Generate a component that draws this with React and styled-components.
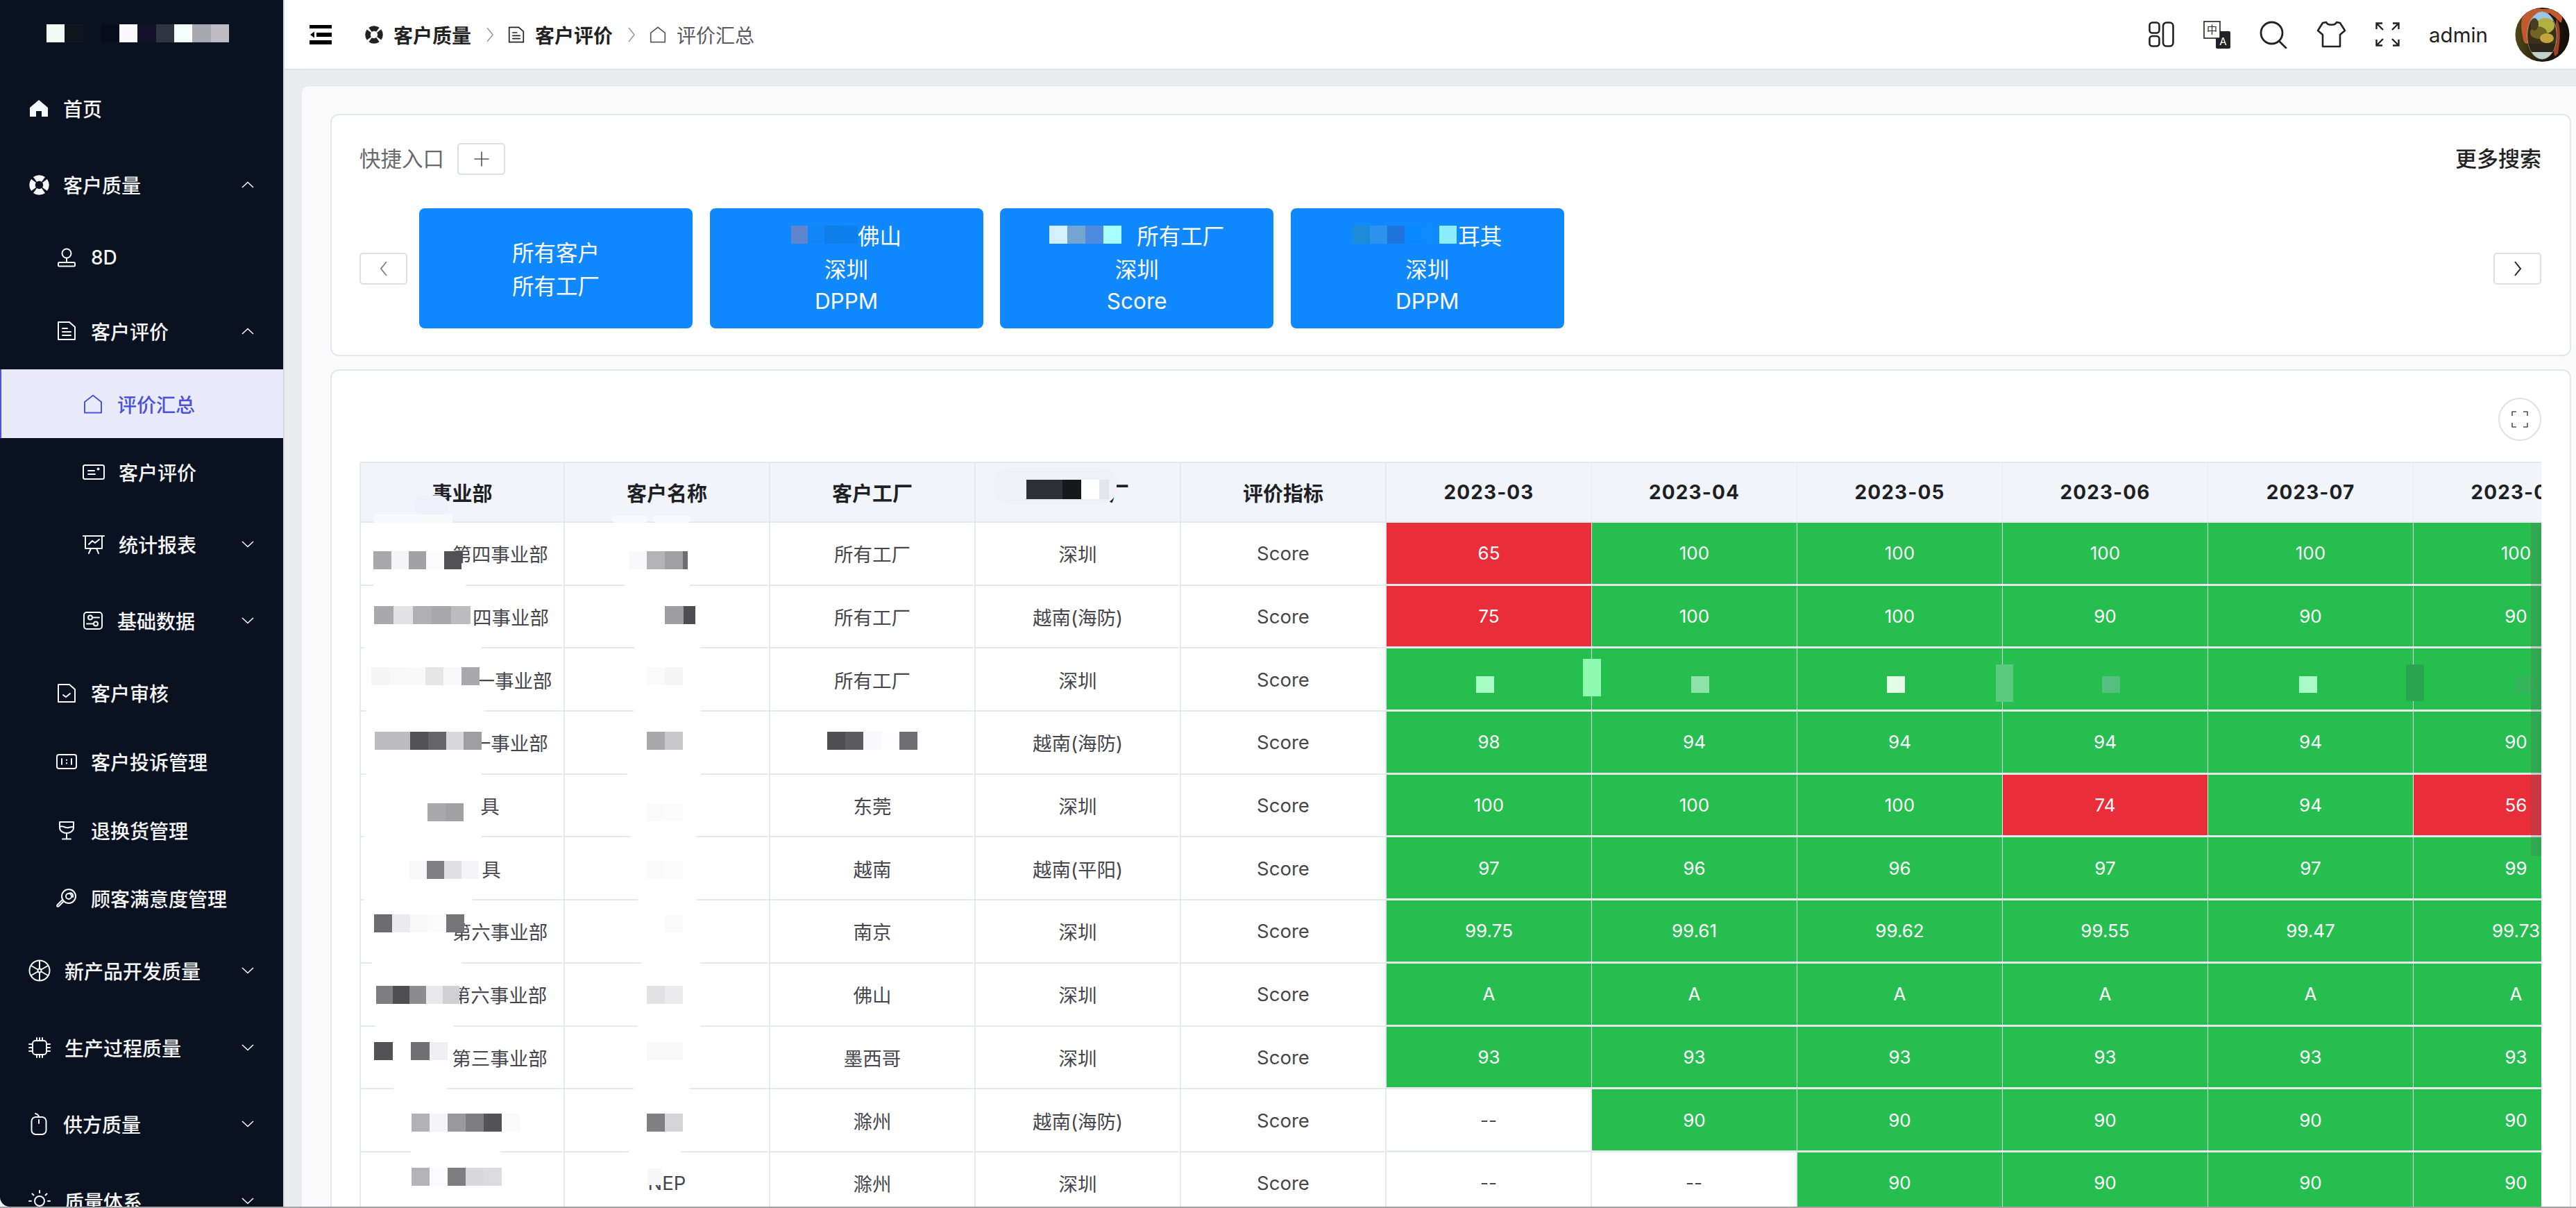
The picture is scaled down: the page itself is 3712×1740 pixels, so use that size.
import React from 'react';
import styled, { createGlobalStyle } from 'styled-components';

const Reset = createGlobalStyle`
  html, body { margin: 0; padding: 0; background: #a2a2a4; }
  body { font-family: Inter, "Noto Sans CJK SC", "Noto Sans", sans-serif; overflow: hidden; }
  * { box-sizing: border-box; }
`;

const Shell = styled.div`
  display: flex;
  width: 3712px;
  height: 1738px;
  overflow: hidden;
  background: #f1f2f5;
`;

/* ---------- sidebar ---------- */
const Sidebar = styled.nav`
  flex: 0 0 410px;
  background: #0a1120;
  border-right: 2px solid #d4d6da;
  border-bottom-left-radius: 14px;
  overflow: hidden;
  color: #f6f7f8;
`;

const LogoBar = styled.div`
  height: 101px;
  padding: 35px 0 0 67px;
`;

const MenuRow = styled.div`
  display: flex;
  align-items: center;
  gap: 20px;
  height: ${p => p.$h}px;
  padding-left: ${p => [41, 81, 119][p.$level]}px;
  padding-right: 42px;
  font-size: 28px;
  font-weight: 500;
  background: ${p => (p.$active ? '#e9ebfb' : 'transparent')};
  color: ${p => (p.$active ? '#4b52dd' : 'inherit')};
  box-shadow: ${p => (p.$active ? 'inset 2px 0 0 #4b52dd' : 'none')};
`;

const MenuIcon = styled.span`
  flex: 0 0 30px;
  height: 30px;
  display: flex;
  align-items: center;
  justify-content: center;
`;

const MenuLabel = styled.span`
  flex: 1;
  white-space: nowrap;
`;

/* ---------- main column ---------- */
const Main = styled.div`
  flex: 1;
  min-width: 0;
  display: flex;
  flex-direction: column;
`;

const TopBar = styled.header`
  flex: 0 0 101px;
  display: flex;
  align-items: center;
  padding: 0 9px 0 36px;
  background: #fff;
  border-bottom: 2px solid #dfe1e7;
`;

const Crumbs = styled.div`
  flex: 1;
  display: flex;
  align-items: center;
  margin-left: 48px;
  font-size: 28px;
  color: #222;
`;

const Crumb = styled.span`
  display: flex;
  align-items: center;
  gap: 15px;
  font-weight: ${p => (p.$current ? 400 : 600)};
  color: ${p => (p.$current ? '#5a5a60' : '#222')};
`;

const CrumbSep = styled.span`
  display: flex;
  margin: 0 20.5px;
  color: #9a9ca2;
`;

const Tools = styled.div`
  display: flex;
  align-items: center;
  gap: 42px;
  color: #222;
`;

const ToolIcon = styled.span`
  display: flex;
  width: ${p => p.$w}px;
  justify-content: center;
`;

const UserName = styled.span`
  width: 82px;
  font-size: 29.5px;
  line-height: 1;
  color: #222;
  padding-top: 2px;
`;

const Band = styled.div`
  flex: 1;
  min-height: 0;
  padding: 22px 0 0 25px;
  background: #ebecef;
`;

const Panel = styled.main`
  height: 100%;
  padding: 40px 7px 0 41px;
  background: #fafafb;
  border-top: 1px solid #e4e6ea;
  border-top-left-radius: 10px;
  overflow: hidden;
`;

const Card = styled.section`
  background: #fff;
  border: 2px solid #e3e6ee;
  border-radius: 12px;
  margin-top: ${p => p.$top || 0}px;
  padding: ${p => p.$pad};
`;

const QuickHead = styled.div`
  display: flex;
  align-items: center;
  height: 46px;
`;

const QuickTitle = styled.span`
  font-size: 30.5px;
  line-height: 44px;
  color: #6a6a6e;
  margin-right: 19px;
`;

const MoreLink = styled.span`
  margin-left: auto;
  font-size: 31px;
  line-height: 44px;
  font-weight: 500;
  color: #222;
`;

const PlainButton = styled.button`
  width: 69px;
  height: 46px;
  padding: 0;
  display: flex;
  align-items: center;
  justify-content: center;
  background: #fff;
  border: 2px solid #dcdfe6;
  border-radius: 5px;
  color: ${p => p.$color || '#555'};
`;

const Carousel = styled.div`
  display: flex;
  align-items: center;
  margin-top: 48px;
`;

const Shortcuts = styled.div`
  flex: 1;
  display: flex;
  gap: 24.6px;
  margin-left: 17px;
`;

const Shortcut = styled.div`
  width: 394px;
  height: 173px;
  padding-bottom: 2px;
  display: flex;
  flex-direction: column;
  align-items: center;
  justify-content: center;
  border-radius: 8px;
  background: #1088ff;
  color: #fff;
  font-size: 31.5px;
`;

const ShortcutLine = styled.div`
  display: flex;
  align-items: center;
  height: 48px;
`;

const Mosaic = styled.span`
  flex: none;
  position: relative;
  z-index: 2;
  display: inline-flex;
  margin-right: ${p => p.$mr || 0}px;
  transform: translateY(${p => p.$dy || 0}px);
`;

const Tile = styled.i`
  display: block;
  width: ${p => p.$w}px;
  height: ${p => p.$h || 26}px;
  background: ${p => p.$c};
`;

const TableTools = styled.div`
  display: flex;
  justify-content: flex-end;
  margin-bottom: 30px;
`;

const RoundButton = styled.span`
  width: 62px;
  height: 62px;
  display: flex;
  align-items: center;
  justify-content: center;
  border: 2px solid #dfe2ea;
  border-radius: 50%;
  color: #555;
`;

const TableClip = styled.div`
  position: relative;
  overflow: hidden;
  height: 1200px;
`;

const Row = styled.div`
  display: grid;
  grid-template-columns: 294px repeat(11, 296px);
  width: 3552px;
  height: ${p => (p.$head ? 88 : 90.7)}px;
  border-left: 2px solid #e6e8f2;
`;

const HeadCell = styled.div`
  position: relative;
  display: flex;
  align-items: center;
  justify-content: center;
  background: #f1f4f9;
  border-top: 2px solid #e6e8f2;
  border-right: ${p => (p.$thin ? '1px solid #e8eaf1' : '2px solid #e6e8f2')};
  border-bottom: 2px solid #e6e8f2;
  font-size: ${p => (p.$date ? 28 : 29)}px;
  font-weight: ${p => (p.$date ? 700 : 600)};
  color: #1f1f26;
  letter-spacing: ${p => (p.$date ? '1.1px' : '0')};
`;

const TextCell = styled.div`
  position: relative;
  display: flex;
  align-items: center;
  justify-content: center;
  border-right: 2px solid #e6e8f2;
  border-bottom: 2px solid #e6e8f2;
  font-size: 27.5px;
  color: #46464c;
  white-space: nowrap;
`;

const CellBody = styled.span`
  display: flex;
  align-items: center;
  transform: translateX(${p => p.$dx || 0}px);
`;

const ValueCell = styled.div`
  position: relative;
  display: flex;
  align-items: center;
  justify-content: center;
  background: ${p => ({ g: '#25be4f', r: '#e92e39', n: '#fff' }[p.$tone])};
  border-right: ${p => (p.$tone === 'n' ? '2px solid #e6e8f2' : '1.5px solid #ecf7ee')};
  border-bottom: 3px solid #e6e8ee;
  font-size: 26px;
  color: ${p => (p.$tone === 'n' ? '#46464c' : '#fff')};
`;

/* a mosaic square laid over a value */
const Patch = styled.i`
  position: absolute;
  z-index: 2;
  left: ${p => p.$l}px;
  top: ${p => p.$t}px;
  width: ${p => p.$w}px;
  height: ${p => p.$h}px;
  background: ${p => p.$c};
  border-radius: ${p => p.$r || 0}px;
`;

const RowGap = styled.i`
  position: absolute;
  z-index: 1;
  left: ${p => p.$l}px;
  bottom: -3px;
  width: ${p => p.$w}px;
  height: 4px;
  background: #fff;
`;

const ScrollThumb = styled.div`
  position: absolute;
  z-index: 3;
  right: 0;
  top: 88px;
  width: 15px;
  height: 480px;
  background: rgba(90, 90, 90, 0.22);
`;

/* ---------- icons ---------- */
const Svg = ({ w = 28, h = 28, vb = '0 0 28 28', sw = 2, children, fill = 'none' }) => (
  <svg width={w} height={h} viewBox={vb} fill={fill} stroke="currentColor" strokeWidth={sw} strokeLinecap="round" strokeLinejoin="round">
    {children}
  </svg>
);

const HomeIcon = () => (
  <Svg><path d="M14 2 L27 13 V26 H18 V18 H10 V26 H1 V13 Z" fill="currentColor" stroke="none" /></Svg>
);
const BuoyIcon = ({ size = 29 }) => (
  <svg width={size} height={size} viewBox="0 0 29 29" fill="none">
    <circle cx="14.5" cy="14.5" r="10" stroke="currentColor" strokeWidth="8.5" pathLength="100" strokeDasharray="20.5 4.5" strokeDashoffset="-14.7" />
  </svg>
);
const StampIcon = () => (
  <Svg><circle cx="14" cy="8" r="6.5" /><path d="M14 15 V21" /><rect x="2" y="21" width="24" height="5.5" rx="1.5" /></Svg>
);
const DocIcon = ({ w = 28, h = 29 }) => (
  <Svg w={w} h={h} vb="0 0 28 29"><path d="M2 2 H18 L26 9 V27 H2 Z" /><path d="M8 11 H15 M8 16 H20 M8 21 H20" /></Svg>
);
const HouseOutline = ({ w = 28, h = 28 }) => (
  <Svg w={w} h={h}><path d="M2 11 L14 1.5 L26 11 V26.5 H2 Z" /></Svg>
);
const CardIcon = () => (
  <Svg w={32} h={24} vb="0 0 32 24"><rect x="1" y="2" width="30" height="20" rx="2.5" /><path d="M8 10 H17 M8 15 H18" /><circle cx="22.5" cy="7.5" r="1" fill="currentColor" /></Svg>
);
const BoardIcon = () => (
  <Svg w={32} h={28} vb="0 0 32 28"><path d="M1 2 H31 M4 2 V20 H28 V2 M9 27 L12 20 M23 27 L20 20" /><path d="M9 14 L14 9 L18 12 L24 7" /></Svg>
);
const SlidersIcon = () => (
  <Svg w={30} h={28} vb="0 0 30 28"><rect x="2" y="2" width="26" height="24" rx="4" /><circle cx="11" cy="9.5" r="3" /><path d="M14 9.5 H24" /><circle cx="19" cy="18.5" r="3" /><path d="M6 18.5 H16" /></Svg>
);
const FileCheckIcon = () => (
  <Svg><path d="M2 2 H18 L26 9 V27 H2 Z" /><path d="M9 17 L13 20 L19 15" /></Svg>
);
const RatioIcon = () => (
  <Svg w={30} h={24} vb="0 0 30 24"><rect x="1" y="2" width="28" height="20" rx="3" /><path d="M8 8 V16 M22 8 V16" /><path d="M15 9.5 V10 M15 14 V14.5" /></Svg>
);
const GlassIcon = () => (
  <Svg w={24} h={28} vb="0 0 24 28"><path d="M2 2 H22 V10 C22 15 17 18 12 18 C7 18 2 15 2 10 Z" /><path d="M2 9 C7 6 10 12 15 10 C18 9 20 9 22 9" /><path d="M12 18 V26 M6 26.5 H18" /></Svg>
);
const LensIcon = () => (
  <Svg w={30} h={28} vb="0 0 30 28"><circle cx="18" cy="11" r="10" /><circle cx="18" cy="11" r="4" /><path d="M18 7 C22 5 25 8 24 12" /><path d="M11 18 L4 25 C2 27 0 25 2 23 L9 16" /></Svg>
);
const WheelIcon = () => (
  <Svg w={32} h={32} vb="0 0 32 32"><circle cx="16" cy="16" r="14.5" /><circle cx="16" cy="16" r="2.5" /><path d="M16 2 V13 M16 19 V30 M4 9 L13.5 14.5 M18.5 17.5 L28 23 M28 9 L18.5 14.5 M13.5 17.5 L4 23" /></Svg>
);
const ChipIcon = () => (
  <Svg w={32} h={30} vb="0 0 32 30"><rect x="6" y="5" width="20" height="20" rx="4" /><path d="M12 1 V5 M16 1 V5 M20 1 V5 M12 25 V29 M16 25 V29 M20 25 V29 M1 10 H6 M1 15 H6 M1 20 H6 M26 10 H31 M26 15 H31 M26 20 H31" /></Svg>
);
const MouseIcon = () => (
  <Svg w={24} h={32} vb="0 0 24 32"><rect x="1.5" y="6" width="21" height="25" rx="6" /><path d="M12 10 V15 M12 6 C12 3 10 2 7 1" /></Svg>
);
const SunIcon = () => (
  <Svg w={32} h={32} vb="0 0 32 32"><circle cx="16" cy="16" r="7" /><path d="M16 1 V4 M16 28 V31 M1 16 H4 M28 16 H31 M5.5 5.5 L7.5 7.5 M26.5 5.5 L24.5 7.5" /></Svg>
);
const Chevron = ({ up }) => (
  <svg width="18" height="10" viewBox="0 0 18 10" fill="none" stroke="currentColor" strokeWidth="1.6">
    <path d={up ? 'M1 9 L9 1.5 L17 9' : 'M1 1 L9 8.5 L17 1'} />
  </svg>
);
const SideArrow = ({ left, w = 12, h = 24, sw = 1.6 }) => (
  <svg width={w} height={h} viewBox="0 0 12 24" fill="none" stroke="currentColor" strokeWidth={sw}>
    <path d={left ? 'M10 2 L2 12 L10 22' : 'M2 2 L10 12 L2 22'} />
  </svg>
);
const FoldIcon = () => (
  <svg width="32" height="28" viewBox="0 0 32 28" fill="currentColor">
    <rect x="0" y="0" width="32" height="5" />
    <rect x="10" y="11" width="22" height="6" />
    <rect x="0" y="22" width="32" height="6" />
    <path d="M1 14 L7 9.5 V18.5 Z" />
  </svg>
);
const LayoutIcon = () => (
  <Svg w={37} h={37} vb="0 0 37 37" sw={2.6}>
    <rect x="1.5" y="1.5" width="14" height="15" rx="4" />
    <rect x="1.5" y="21" width="14" height="14.5" rx="4" />
    <rect x="21" y="1.5" width="14.5" height="34" rx="5" />
  </Svg>
);
const TranslateIcon = () => (
  <svg width="39" height="40" viewBox="0 0 39 40">
    <rect x="18" y="15" width="21" height="25" rx="2" fill="#222" />
    <rect x="1" y="1" width="23" height="24" fill="#fff" stroke="#222" strokeWidth="1.6" />
    <text x="12.5" y="18" fontSize="15" textAnchor="middle" fill="#222" fontFamily="Noto Sans CJK SC">中</text>
    <text x="28.5" y="35" fontSize="15" textAnchor="middle" fill="#fff" fontFamily="Inter">A</text>
  </svg>
);
const SearchIcon = () => (
  <Svg w={40} h={40} vb="0 0 40 40" sw={2.8}><circle cx="17.5" cy="17.5" r="15.5" /><path d="M28 29 L38 39" /></Svg>
);
const ShirtIcon = () => (
  <Svg w={43} h={39} vb="0 0 43 39" sw={2.6}>
    <path d="M14 2 C16 7 27 7 29 2 L34 3 L41 14 L34 20 V37 H9 V20 L2 14 L9 3 Z" />
  </Svg>
);
const ExpandIcon = () => (
  <Svg w={35} h={35} vb="0 0 35 35" sw={2.4}>
    <path d="M1.5 10 V1.5 H10 M1.5 1.5 L11 11 M33.5 10 V1.5 H25 M33.5 1.5 L24 11 M1.5 25 V33.5 H10 M1.5 33.5 L11 24 M33.5 25 V33.5 H25 M33.5 33.5 L24 24" strokeLinecap="butt" strokeLinejoin="miter" />
  </Svg>
);
const CornersIcon = () => (
  <Svg w={24} h={24} vb="0 0 24 24" sw={1.6}>
    <path d="M1 7 V1 H7 M17 1 H23 V7 M1 17 V23 H7 M17 23 H23 V17" strokeLinecap="butt" strokeLinejoin="miter" />
  </Svg>
);
const PlusIcon = () => (
  <Svg w={22} h={22} vb="0 0 22 22" sw={1.6}><path d="M11 1 V21 M1 11 H21" /></Svg>
);
const Avatar = () => (
  <svg width="79" height="78" viewBox="0 0 79 78">
    <defs>
      <clipPath id="disc"><circle cx="39.5" cy="39" r="39" /></clipPath>
      <clipPath id="ball"><ellipse cx="39" cy="40" rx="21" ry="34" /></clipPath>
      <linearGradient id="scene" x1="0" y1="0" x2="1" y2="0">
        <stop offset="0" stopColor="#4e4a16" />
        <stop offset="0.45" stopColor="#2a1c0e" />
        <stop offset="1" stopColor="#120c08" />
      </linearGradient>
    </defs>
    <g clipPath="url(#disc)">
      <rect width="79" height="78" fill="url(#scene)" />
      <path d="M10 16 C14 6 26 0 38 2 L62 2 C68 10 70 16 66 22 L58 14 L50 8 L30 8 L24 16 L20 46 C20 54 14 54 12 46 C10 36 8 26 10 16 Z" fill="#c25a30" />
      <path d="M60 16 C66 26 66 44 62 66 L58 70 C54 66 58 50 58 30 Z" fill="#9c4426" />
      <ellipse cx="39" cy="40" rx="21.5" ry="34.5" fill="#c9d2d0" />
      <g clipPath="url(#ball)">
        <rect x="17" y="5" width="44" height="70" fill="#3a3018" />
        <rect x="17" y="5" width="44" height="14" fill="#9fc4e4" />
        <ellipse cx="44" cy="26" rx="13" ry="11" fill="#b0b040" />
        <ellipse cx="34" cy="36" rx="12" ry="9" fill="#6f6420" />
        <ellipse cx="46" cy="44" rx="10" ry="7" fill="#c2a63c" />
        <ellipse cx="28" cy="24" rx="6" ry="9" fill="#4a3c1e" />
        <rect x="17" y="52" width="44" height="12" fill="#2a261a" />
        <rect x="17" y="64" width="44" height="12" fill="#c4d0ce" />
      </g>
    </g>
  </svg>
);

/* ---------- data ---------- */
const MENU = [
  { label: '首页', icon: <HomeIcon />, level: 0, h: 110 },
  { label: '客户质量', icon: <BuoyIcon />, level: 0, h: 110, arrow: 'up' },
  { label: '8D', icon: <StampIcon />, level: 1, h: 100 },
  { label: '客户评价', icon: <DocIcon />, level: 1, h: 111, arrow: 'up' },
  { label: '评价汇总', icon: <HouseOutline />, level: 2, h: 99, active: true },
  { label: '客户评价', icon: <CardIcon />, level: 2, h: 98 },
  { label: '统计报表', icon: <BoardIcon />, level: 2, h: 110, arrow: 'down' },
  { label: '基础数据', icon: <SlidersIcon />, level: 2, h: 110, arrow: 'down' },
  { label: '客户审核', icon: <FileCheckIcon />, level: 1, h: 98 },
  { label: '客户投诉管理', icon: <RatioIcon />, level: 1, h: 99 },
  { label: '退换货管理', icon: <GlassIcon />, level: 1, h: 99 },
  { label: '顾客满意度管理', icon: <LensIcon />, level: 1, h: 98 },
  { label: '新产品开发质量', icon: <WheelIcon />, level: 0, h: 110, arrow: 'down' },
  { label: '生产过程质量', icon: <ChipIcon />, level: 0, h: 111, arrow: 'down' },
  { label: '供方质量', icon: <MouseIcon />, level: 0, h: 110, arrow: 'down' },
  { label: '质量体系', icon: <SunIcon />, level: 0, h: 112, arrow: 'down' },
];

const LOGO = ['#f2f8f4', '#10141f', '#0a1120', '#070c1c', '#f8f8fd', '#12122a', '#2e353f', '#f4feff', '#a8a8b2', '#bdbdc3'];

const SHORTCUTS = [
  { lines: ['所有客户', '所有工厂'] },
  { mosaic: ['#5f86cd', '#1186f8', '#0f7ee8', '#0f7fee'], w: 24, mr: 0, first: '佛山', lines: ['深圳', 'DPPM'] },
  { mosaic: ['#d4f0ff', '#72a5d0', '#4f89e0', '#a8fdff'], w: 26, mr: 22, first: '所有工厂', lines: ['深圳', 'Score'] },
  { mosaic: ['#1c8cd8', '#2e92ef', '#1d74dd', '#0a88ff', '#0f8aff', '#8beeff'], w: 25, mr: 2, first: '耳其', lines: ['深圳', 'DPPM'] },
];

const DATES = ['2023-03', '2023-04', '2023-05', '2023-06', '2023-07', '2023-08'];

// tiles: "hex" or "hex:width"
const m = (tiles, w, dy = 0, mr = 0) => ({
  tiles: tiles.split(' ').map(t => {
    const [c, tw] = t.split(':');
    return { c: '#' + c, w: tw ? Number(tw) : w };
  }),
  dy,
  mr,
});

const ROWS = [
  {
    dept: m('a9a9ac f5f5f7 a2a2a5 fbfbfc 525255', 25.4, 10, -13), deptText: '第四事业部', dx: -2,
    cust: m('f8f8fa b4b4b6 a0a0a2 6e6e70:7', 26, 10), custDx: -13, factory: '所有工厂', plant: '深圳',
    vals: ['r65', '100', '100', '100', '100', '100'], gaps: [[18, 133], [86, 94]],
  },
  {
    dept: m('a9a9ac e2e2e4 b0b0b2 a8a8aa bcbcbe', 27.8, -2, 3), deptText: '四事业部', dx: -1,
    cust: m('9e9ea0:27 4e4e52:17', 26, -2), custDx: 19, factory: '所有工厂', plant: '越南(海防)',
    vals: ['r75', '100', '100', '90', '90', '90'], gaps: [[5, 169], [100, 95]],
  },
  {
    dept: m('f5f5f6 f8f8f8 f9f9f9 e6e6e6 f8f8f8 a9a9ab', 26, -5, -5), deptText: '一事业部', dx: -1,
    cust: m('fafafa f5f5f5', 26, -5), custDx: -3, factory: '所有工厂', plant: '深圳',
    vals: ['', '', '', '', '', ''], gaps: [[7, 171], [99, 97]],
    patches: [
      [[129, 40, 26, 24, '#a8fbc5'], [283, 15, 26, 54, '#8ffbb0']],
      [[143, 40, 26, 24, '#8ee2a8']],
      [[129, 40, 26, 24, '#e4fbe8'], [286, 23, 25, 54, '#5ac97e']],
      [[143, 40, 26, 24, '#55bf80']],
      [[131, 40, 26, 24, '#a8fbc5'], [285, 23, 26, 53, '#2aa651']],
      [[146, 40, 26, 24, '#35b55a']],
    ],
  },
  {
    dept: m('bcbcbe bcbcbe 525255 666668 d8d8da 9f9fa1', 25.6, -2, -14), deptText: '一事业部', dx: -1,
    cust: m('a9a9ab c8c8ca', 26, -2), custDx: -3, factory: m('4f4f52 5c5c5e f8f8fa fdfdff 6e6e70', 26, -2), plant: '越南(海防)',
    vals: ['98', '94', '94', '94', '94', '90'], gaps: [[7, 167], [90, 106]],
  },
  {
    dept: m('a9a9ab a2a2a4', 26, 10, 24), deptText: '具', dx: 2,
    cust: m('fafafa fbfbfb', 26, 10), custDx: -3, factory: '东莞', plant: '深圳',
    vals: ['100', '100', '100', 'r74', '94', 'r56'], gaps: [[4, 170], [95, 94]],
  },
  {
    dept: m('f8f8f8 808082 e0e0e2 f5f5f7', 25, 2, 4), deptText: '具', dx: -10,
    cust: m('fafafa fbfbfb', 26, 2), custDx: -3, factory: '越南', plant: '越南(平阳)',
    vals: ['97', '96', '96', '97', '97', '99'], gaps: [[4, 157], [105, 85]],
  },
  {
    dept: m('6c6c6e ececee f8f8f8 fbfbfb 767678', 26, -11, -17), deptText: '第六事业部', dx: -2,
    cust: m('ffffff fafafa', 26, -11), custDx: -3, factory: '南京', plant: '深圳',
    vals: ['99.75', '99.61', '99.62', '99.55', '99.47', '99.73'], gaps: [[16, 129], [110, 85]],
  },
  {
    dept: m('7e7e80 4f4f52 8c8c8e e8e8ea d0d0d2', 24, 1, -11), deptText: '第六事业部', dx: -1,
    cust: m('e2e2e4 ebebed', 26, 1), custDx: -3, factory: '佛山', plant: '深圳',
    vals: ['A', 'A', 'A', 'A', 'A', 'A'], gaps: [[21, 113], [105, 90]],
  },
  {
    dept: m('525255 ffffff 707072 f0f0f2', 26.5, -9, 6), deptText: '第三事业部', dx: -2,
    cust: m('f8f8f8 f8f8f8', 26, -9), custDx: -3, factory: '墨西哥', plant: '深圳',
    vals: ['93', '93', '93', '93', '93', '93'], gaps: [[47, 77], [99, 81]],
  },
  {
    dept: m('b2b2b4 f5f5f7 9a9a9c 7e7e80 535356 fafafa', 26, 3), deptText: '', dx: 5,
    cust: m('808082 d4d4d6', 26, 3), custDx: -3, factory: '滁州', plant: '越南(海防)',
    vals: ['--', '90', '90', '90', '90', '90'], gaps: [[72, 129], [92, 75]],
  },
  {
    dept: m('b4b4b6 fbfbfd 7e7e80 d8d8da dcdcde', 26, -9), deptText: '', dx: -8,
    custText: 'NEP', custVeil: true, factory: '滁州', plant: '深圳',
    vals: ['--', '--', '90', '90', '90', '90'], gaps: [],
  },
];

const Tiles = ({ data }) => (
  <Mosaic $dy={data.dy} $mr={data.mr}>
    {data.tiles.map((t, i) => <Tile key={i} $c={t.c} $w={t.w} />)}
  </Mosaic>
);

const toneOf = v => (v === '--' ? 'n' : v[0] === 'r' ? 'r' : 'g');

function App() {
  return (
    <Shell>
      <Reset />
      <Sidebar>
        <LogoBar>
          <Mosaic>
            {LOGO.map((c, i) => <Tile key={i} $c={c} $w={26.3} />)}
          </Mosaic>
        </LogoBar>
        {MENU.map((item, i) => (
          <MenuRow key={i} $h={item.h} $level={item.level} $active={item.active}>
            <MenuIcon>{item.icon}</MenuIcon>
            <MenuLabel>{item.label}</MenuLabel>
            {item.arrow && <Chevron up={item.arrow === 'up'} />}
          </MenuRow>
        ))}
      </Sidebar>

      <Main>
        <TopBar>
          <FoldIcon />
          <Crumbs>
            <Crumb><BuoyIcon size={26} />客户质量</Crumb>
            <CrumbSep><SideArrow /></CrumbSep>
            <Crumb><DocIcon w={24} h={28} />客户评价</Crumb>
            <CrumbSep><SideArrow /></CrumbSep>
            <Crumb $current><HouseOutline w={24} h={28} />评价汇总</Crumb>
          </Crumbs>
          <Tools>
            <ToolIcon $w={37}><LayoutIcon /></ToolIcon>
            <ToolIcon $w={39}><TranslateIcon /></ToolIcon>
            <ToolIcon $w={40}><SearchIcon /></ToolIcon>
            <ToolIcon $w={43}><ShirtIcon /></ToolIcon>
            <ToolIcon $w={35}><ExpandIcon /></ToolIcon>
            <UserName>admin</UserName>
            <Avatar />
          </Tools>
        </TopBar>

        <Band>
          <Panel>
            <Card $pad="40px 41px 38px 40px">
              <QuickHead>
                <QuickTitle>快捷入口</QuickTitle>
                <PlainButton><PlusIcon /></PlainButton>
                <MoreLink>更多搜索</MoreLink>
              </QuickHead>
              <Carousel>
                <PlainButton $color="#85878e"><SideArrow left w={12} h={24} sw={2} /></PlainButton>
                <Shortcuts>
                  {SHORTCUTS.map((s, i) => (
                    <Shortcut key={i}>
                      {s.mosaic && (
                        <ShortcutLine>
                          <Mosaic $mr={s.mr}>
                            {s.mosaic.map((c, j) => <Tile key={j} $c={c} $w={s.w} />)}
                          </Mosaic>
                          {s.first}
                        </ShortcutLine>
                      )}
                      {s.lines.map(l => <ShortcutLine key={l}>{l}</ShortcutLine>)}
                    </Shortcut>
                  ))}
                </Shortcuts>
                <PlainButton $color="#222"><SideArrow w={12} h={24} sw={2} /></PlainButton>
              </Carousel>
            </Card>

            <Card $top={19} $pad="39px 41px 0 40px">
              <TableTools>
                <RoundButton><CornersIcon /></RoundButton>
              </TableTools>
              <TableClip>
                <Row $head>
                  <HeadCell>
                    事业部
                    <Patch $l={19} $t={74} $w={113} $h={12} $c="#f8f9fd" />
                    <Patch $l={77} $t={47} $w={48} $h={27} $c="#eef0fa" $r={12} />
                  </HeadCell>
                  <HeadCell>
                    客户名称
                    <Patch $l={68} $t={75} $w={51} $h={11} $c="#f8f9fd" $r={6} />
                    <Patch $l={127} $t={75} $w={54} $h={11} $c="#f8f9fd" $r={6} />
                  </HeadCell>
                  <HeadCell>客户工厂</HeadCell>
                  <HeadCell>
                    <Patch $l={26} $t={7} $w={177} $h={52} $c="#f0f1f6" $r={22} />
                    <Mosaic $dy={-4} $mr={0}>
                      <Tile $c="#2f3036" $w={52} $h={28} />
                      <Tile $c="#17181c" $w={27} $h={28} />
                      <Tile $c="#ffffff" $w={26} $h={28} />
                      <Tile $c="#e4e4ec" $w={14} $h={28} />
                    </Mosaic>
                    厂
                  </HeadCell>
                  <HeadCell>评价指标</HeadCell>
                  {DATES.map(d => <HeadCell key={d} $date $thin>{d}</HeadCell>)}
                </Row>

                {ROWS.map((r, i) => (
                  <Row key={i}>
                    <TextCell>
                      <CellBody $dx={r.dx}>
                        <Tiles data={r.dept} />
                        {r.deptText}
                      </CellBody>
                      {r.gaps[0] && <RowGap $l={r.gaps[0][0]} $w={r.gaps[0][1]} />}
                    </TextCell>
                    <TextCell>
                      <CellBody $dx={r.custDx}>
                        {r.cust ? <Tiles data={r.cust} /> : r.custText}
                      </CellBody>
                      {r.custVeil && <Patch $l={119} $t={23} $w={20} $h={24} $c="#f6f6f9" />}
                      {r.gaps[1] && <RowGap $l={r.gaps[1][0]} $w={r.gaps[1][1]} />}
                    </TextCell>
                    <TextCell>
                      {typeof r.factory === 'string' ? r.factory : <Tiles data={r.factory} />}
                    </TextCell>
                    <TextCell>{r.plant}</TextCell>
                    <TextCell>Score</TextCell>
                    {r.vals.map((v, j) => (
                      <ValueCell key={j} $tone={v ? toneOf(v) : 'g'}>
                        {v.replace(/^r/, '')}
                        {r.patches && r.patches[j].map((p, k) => (
                          <Patch key={k} $l={p[0]} $t={p[1]} $w={p[2]} $h={p[3]} $c={p[4]} />
                        ))}
                      </ValueCell>
                    ))}
                  </Row>
                ))}
                <ScrollThumb />
              </TableClip>
            </Card>
          </Panel>
        </Band>
      </Main>
    </Shell>
  );
}

export default App;
